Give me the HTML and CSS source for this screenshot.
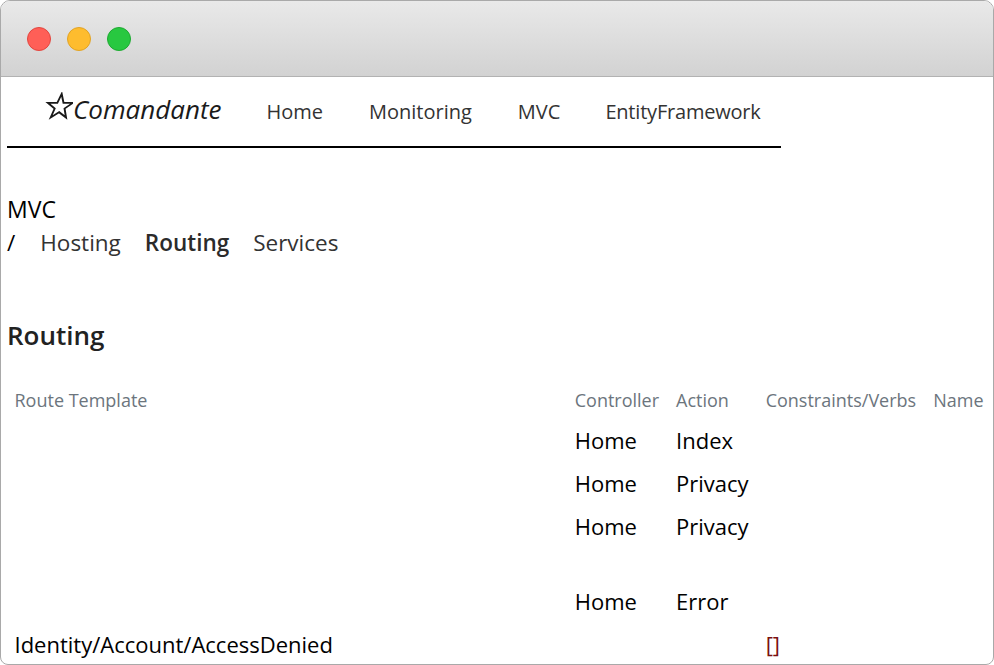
FILE: index.html
```html
<!DOCTYPE html>
<html lang="en">
<head>
<meta charset="utf-8">
<title>Comandante - Routing</title>
<link rel="stylesheet" href="styles.css">
</head>
<body>
<div class="window">
  <div class="titlebar">
    <span class="light red"></span>
    <span class="light yellow"></span>
    <span class="light green"></span>
  </div>
  <div class="page">
    <nav class="topnav">
      <a class="brand" href="#"><svg class="star" viewBox="-1 -1 30 30" width="28" height="28" aria-hidden="true"><polygon points="14,1 17.3,10.5 27.3,10.7 19.3,16.7 22.2,26.3 14,20.6 5.8,26.3 8.7,16.7 0.7,10.7 10.7,10.5" fill="none" stroke="#1a1a1a" stroke-width="2" stroke-linejoin="miter" transform="skewX(-8) translate(3 0)"/></svg>Comandante</a>
      <a class="nav-link" href="#">Home</a>
      <a class="nav-link" href="#">Monitoring</a>
      <a class="nav-link" href="#">MVC</a>
      <a class="nav-link nav-last" href="#">EntityFramework</a>
    </nav>

    <div class="section-title">MVC</div>
    <ul class="crumbs">
      <li class="sep">/</li>
      <li><a href="#">Hosting</a></li>
      <li class="active"><a href="#">Routing</a></li>
      <li><a href="#">Services</a></li>
    </ul>

    <h2 class="heading">Routing</h2>

    <table class="routes">
      <thead>
        <tr>
          <th class="col-template">Route Template</th>
          <th>Controller</th>
          <th>Action</th>
          <th>Constraints/Verbs</th>
          <th>Name</th>
        </tr>
      </thead>
      <tbody>
        <tr><td></td><td>Home</td><td>Index</td><td></td><td></td></tr>
        <tr><td></td><td>Home</td><td>Privacy</td><td></td><td></td></tr>
        <tr><td></td><td>Home</td><td>Privacy</td><td></td><td></td></tr>
        <tr class="spaced"><td></td><td>Home</td><td>Error</td><td></td><td></td></tr>
        <tr><td>Identity/Account/AccessDenied</td><td></td><td></td><td><span class="verbs">[]</span></td><td></td></tr>
      </tbody>
    </table>
  </div>
</div>
</body>
</html>
```

FILE: styles.css
```css
html, body {
  margin: 0;
  padding: 0;
  background: #ffffff;
}

body {
  font-family: "Open Sans", "Noto Sans", "Liberation Sans", sans-serif;
  color: #000;
}

.window {
  box-sizing: border-box;
  height: 665px;
  border: 1px solid #a9a9a9;
  border-radius: 10px 10px 8px 8px;
  overflow: hidden;
  background: #fff;
}

.titlebar {
  height: 75px;
  background: linear-gradient(#e9e9e9, #d2d2d2);
  border-bottom: 1px solid #b2b2b2;
  display: flex;
  align-items: center;
  gap: 16px;
  padding-left: 26px;
}

.light {
  width: 22px;
  height: 22px;
  border-radius: 50%;
  border: 1px solid transparent;
}

.light.red { background: #ff5f57; border-color: #e2463f; }
.light.yellow { background: #febc2e; border-color: #e1a325; }
.light.green { background: #28c840; border-color: #1eaa31; }

.page {
  padding: 0 1px 0 6px;
}

.topnav {
  display: inline-flex;
  align-items: baseline;
  padding: 14px 0 19px;
  border-bottom: 2px solid #000;
}

.topnav a {
  text-decoration: none;
}

.brand {
  font-size: 26px;
  line-height: 36px;
  font-style: italic;
  color: #1a1a1a;
  margin-left: 38px;
  margin-right: 22px;
}

.star {
  vertical-align: -1px;
}

.nav-link {
  font-size: 20px;
  line-height: 27px;
  color: #333;
  padding: 0 23px;
}

.nav-link.nav-last {
  padding-left: 22px;
  padding-right: 20px;
  letter-spacing: -0.2px;
}

.section-title {
  font-size: 23px;
  line-height: 30px;
  margin-top: 46px;
  color: #000;
}

.crumbs {
  list-style: none;
  margin: 4px 0 0;
  padding: 0;
  display: flex;
  gap: 24px;
  font-size: 22.5px;
  line-height: 30px;
}

.crumbs a {
  color: #333;
  text-decoration: none;
}

.crumbs .sep {
  color: #000;
  margin-right: 1px;
}

.crumbs .active a {
  font-weight: 600;
  color: #2b2b2b;
}

.heading {
  font-size: 26px;
  line-height: 35px;
  font-weight: 600;
  color: #222;
  margin: 60px 0 0;
}

.routes {
  width: 100%;
  margin-top: 29px;
  border-collapse: collapse;
}

.routes th {
  font-size: 18px;
  line-height: 25px;
  font-weight: 400;
  color: #6c757d;
  text-align: left;
  padding: 6px 8.5px;
  white-space: nowrap;
}

.routes th.col-template {
  width: 100%;
  padding-left: 7.5px;
}

.routes td {
  font-size: 22px;
  line-height: 31px;
  padding: 6px 8.5px;
  white-space: nowrap;
  color: #000;
}

.routes td:first-child {
  padding-left: 7.5px;
}

.routes tr.spaced td {
  padding-top: 38px;
}

.verbs {
  color: #7a1010;
}
```
